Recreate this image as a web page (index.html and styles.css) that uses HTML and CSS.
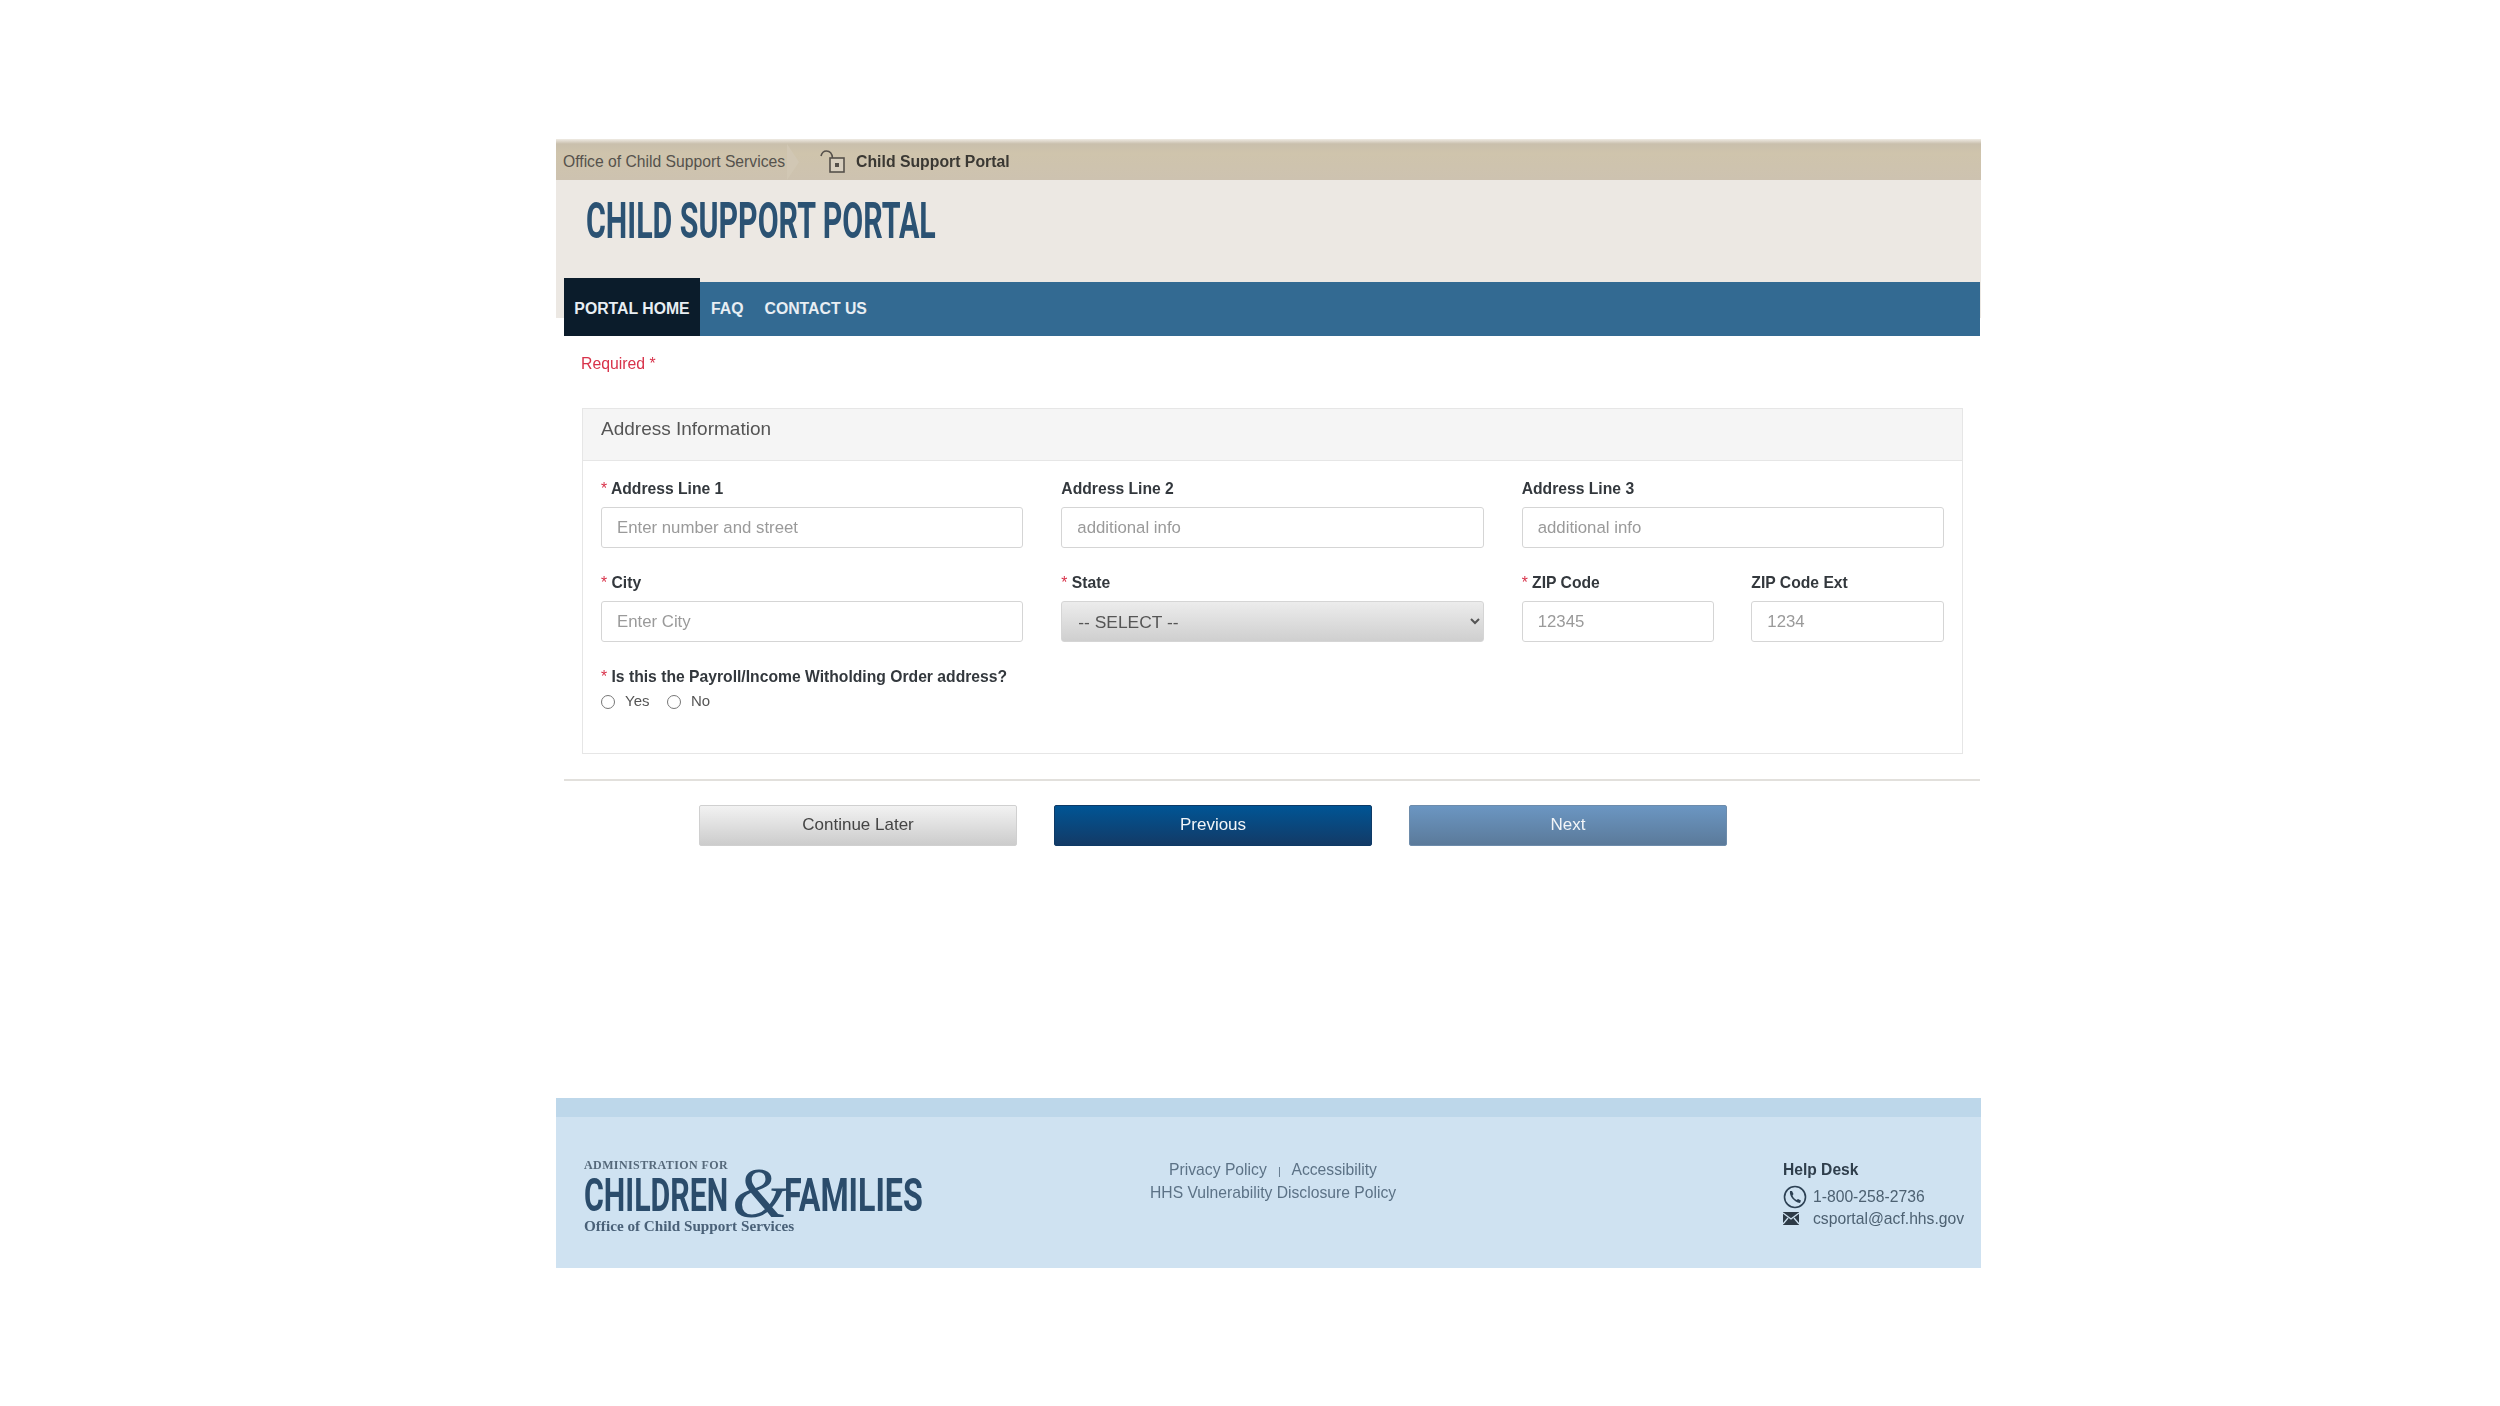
FILE: index.html
```html
<!DOCTYPE html>
<html lang="en">
<head>
<meta charset="utf-8">
<title>Child Support Portal</title>
<link rel="stylesheet" href="styles.css">
</head>
<body>
<div class="page">

  <div class="crumbs">
    <span class="crumbOffice">Office of Child Support Services</span>
    <span class="crumbArrow"></span>
    <svg class="lockIcon" width="26" height="24" viewBox="0 0 26 24" fill="none" stroke="#55504a" stroke-width="1.6">
      <path d="M1 6 C2 2 4 1 6.500 1 C10 1 12 3 12.500 8"/>
      <rect x="10" y="8" width="14" height="14" fill="#d8cfbf"/>
      <rect x="15" y="13" width="4" height="4" fill="#55504a" stroke="none"/>
    </svg>
    <span class="crumbPortal">Child Support Portal</span>
  </div>

  <div class="banner">
    <div class="bannerTitle"><span class="squeeze titleText">CHILD SUPPORT PORTAL</span></div>
  </div>

  <div class="nav">
    <a class="navItem navHome">PORTAL HOME</a>
    <a class="navItem">FAQ</a>
    <a class="navItem">CONTACT US</a>
  </div>

  <div class="required">Required *</div>

  <div class="panel">
    <div class="panelHead">Address Information</div>
    <div class="panelBody">
      <div class="formGrid">
        <div class="field">
          <label><span class="star">*</span> Address Line 1</label>
          <input type="text" placeholder="Enter number and street">
        </div>
        <div class="field">
          <label>Address Line 2</label>
          <input type="text" placeholder="additional info">
        </div>
        <div class="field">
          <label>Address Line 3</label>
          <input type="text" placeholder="additional info">
        </div>
        <div class="field">
          <label><span class="star">*</span> City</label>
          <input type="text" placeholder="Enter City">
        </div>
        <div class="field">
          <label><span class="star">*</span> State</label>
          <select><option>-- SELECT --</option></select>
        </div>
        <div class="zipRow">
          <div class="field">
            <label><span class="star">*</span> ZIP Code</label>
            <input type="text" placeholder="12345">
          </div>
          <div class="field">
            <label>ZIP Code Ext</label>
            <input type="text" placeholder="1234">
          </div>
        </div>
      </div>
      <div class="question">
        <label><span class="star">*</span> Is this the Payroll/Income Witholding Order address?</label>
        <div class="radios">
          <span class="radio"></span><span class="radioText">Yes</span>
          <span class="radio"></span><span class="radioText">No</span>
        </div>
      </div>
    </div>
  </div>

  <hr class="divider">

  <div class="buttons">
    <button class="btn btnLater">Continue Later</button>
    <button class="btn btnPrev">Previous</button>
    <button class="btn btnNext">Next</button>
  </div>

  <div class="footer">
    <div class="footerBand"></div>
    <div class="footerBody">
      <div class="logo">
        <div class="logoAdmin">ADMINISTRATION FOR</div>
        <div class="logoRow">
          <div class="logoChildren"><span class="squeeze logoWord">CHILDREN</span></div>
          <div class="logoAmp">&amp;</div>
          <div class="logoFamilies"><span class="squeeze logoWord logoWide">FAMILIES</span></div>
        </div>
        <div class="logoOffice">Office of Child Support Services</div>
      </div>
      <div class="footerLinks">
        <div>Privacy Policy <span class="pipe">|</span> Accessibility</div>
        <div>HHS Vulnerability Disclosure Policy</div>
      </div>
      <div class="help">
        <div class="helpTitle">Help Desk</div>
        <div class="helpRow">
          <svg class="helpIcon" width="24" height="24" viewBox="0 0 24 24" fill="none" stroke="#2d4154">
            <circle cx="12" cy="12" r="10.500" stroke-width="1.6"/>
            <path d="M7 6 C6 11 11 17 17 18 L18 15.500 L15 14 L13.500 15 C11.500 14 10 12 9.500 10.500 L10.500 9 L9 6 Z" fill="#2d4154" stroke="none"/>
          </svg>
          <span>1-800-258-2736</span>
        </div>
        <div class="helpRow">
          <svg class="helpIcon" width="24" height="16" viewBox="0 0 24 16">
            <rect x="0" y="1" width="16" height="13" fill="#2d3a46"/>
            <path d="M0 2 L8 8 L16 2 M0 13 L5 7 M16 13 L11 7" fill="none" stroke="#cfe2f1" stroke-width="1.300"/>
          </svg>
          <span>csportal@acf.hhs.gov</span>
        </div>
      </div>
    </div>
  </div>

</div>
</body>
</html>
```

FILE: styles.css
```css
* {
  box-sizing: border-box;
}

body {
  margin: 0;
  background-color: #ffffff;
  font-family: "Liberation Sans", Arial, sans-serif;
  color: #333333;
}

.page {
  width: 1425px;
  margin-left: 556px;
  padding-top: 139px;
  filter: blur(0.6px);
}

/* squeezed display type, the portal uses a condensed webfont */
.squeeze {
  display: inline-block;
  transform-origin: left top;
  white-space: nowrap;
  font-family: "Roboto", "Liberation Sans", sans-serif;
}

/* top strip */
.crumbs {
  height: 41px;
  display: flex;
  align-items: center;
  padding: 4px 0 0 7px;
  background: linear-gradient(#efebe4, #c9bfac 12%, #cfc4ac 35%, #cdc2b0);
}

.crumbOffice {
  font-size: 15.700px;
  color: #55524c;
}

.crumbArrow {
  width: 0;
  height: 0;
  margin-left: 2px;
  border-top: 18px solid transparent;
  border-bottom: 18px solid transparent;
  border-left: 12px solid #d1c7b4;
}

.lockIcon {
  margin-left: 21px;
}

.crumbPortal {
  margin-left: 10px;
  font-size: 15.800px;
  font-weight: bold;
  color: #3a3833;
}

.banner {
  height: 138px;
  background-color: #ece8e3;
}

.bannerTitle {
  padding: 12px 0 0 30px;
}

.titleText {
  font-size: 50px;
  line-height: 58px;
  font-weight: bold;
  color: #2b5273;
  transform: scaleX(0.607);
}

/* nav */
.nav {
  display: flex;
  height: 54px;
  margin: -36px 1px 0 8px;
  background-color: #336a92;
  position: relative;
}

.navItem {
  display: flex;
  align-items: center;
  padding: 0 10px;
  font-size: 15.800px;
  font-weight: bold;
  color: #e8eef3;
}

.navItem + .navItem {
  padding-left: 11px;
}

.navHome {
  width: 136px;
  margin-top: -4px;
  padding-top: 4px;
  justify-content: center;
  background-color: #0b1c2b;
  white-space: nowrap;
}

.required {
  margin: 19px 0 0 25px;
  height: 18px;
  font-size: 15.800px;
  line-height: 18px;
  color: #d8324a;
}

/* address panel */
.panel {
  width: 1381px;
  height: 346px;
  margin: 35px 0 0 26px;
  border: 1px solid #e6e6e6;
}

.panelHead {
  height: 52px;
  padding: 10px 0 0 18px;
  background-color: #f5f5f5;
  border-bottom: 1px solid #e6e6e6;
  font-size: 19px;
  line-height: 20px;
  color: #555555;
}

.panelBody {
  padding: 19px 18px 0 18px;
}

.formGrid {
  display: grid;
  grid-template-columns: repeat(3, 1fr);
  column-gap: 38px;
  row-gap: 26px;
}

.zipRow {
  display: grid;
  grid-template-columns: 1fr 1fr;
  column-gap: 37px;
}

label {
  display: block;
  height: 18px;
  font-size: 15.700px;
  line-height: 18px;
  font-weight: bold;
  color: #33383d;
}

.star {
  color: #d8324a;
  font-weight: normal;
}

.field input,
.field select {
  display: block;
  width: 100%;
  height: 41px;
  margin-top: 9px;
  border: 1px solid #d5d5d5;
  border-radius: 3px;
  font-family: "Liberation Sans", Arial, sans-serif;
}

.field input {
  padding: 0 15px;
  background-color: #ffffff;
  font-size: 16.800px;
}

.field input::placeholder {
  color: #9a9a9a;
}

.field select {
  padding: 0 12px;
  background: linear-gradient(#ececec, #cfcfcf);
  color: #555555;
  font-size: 17.400px;
}

.question {
  margin-top: 26px;
}

.radios {
  display: flex;
  align-items: center;
  margin-top: 5px;
  height: 18px;
}

.radio {
  width: 14px;
  height: 14px;
  margin-top: 4px;
  border: 1px solid #767676;
  border-radius: 50%;
  background-color: #ffffff;
}

.radioText {
  width: 42px;
  margin-left: 10px;
  font-size: 15px;
  color: #555555;
}

.radioText:last-child {
  margin-left: 10px;
}

.divider {
  height: 2px;
  margin: 25px 1px 0 8px;
  border: 0;
  background-color: #e2e0dc;
}

/* buttons */
.buttons {
  display: flex;
  gap: 37px;
  margin: 24px 0 0 143px;
}

.btn {
  width: 318px;
  height: 41px;
  padding-bottom: 3px;
  border: 1px solid #d0d0d0;
  border-radius: 2px;
  font-family: "Liberation Sans", Arial, sans-serif;
  font-size: 17px;
}

.btnLater {
  background: linear-gradient(#f2f2f2, #cccccc);
  color: #444444;
}

.btnPrev {
  border-color: #0e3a66;
  background: linear-gradient(#005595, #133a66);
  color: #f2f5f8;
}

.btnNext {
  border-color: #6e8cab;
  background: linear-gradient(#6b96c2, #5b7a9a);
  color: #f2f5f8;
}

/* footer */
.footer {
  height: 170px;
  margin-top: 252px;
  background-color: #cfe2f1;
}

.footerBand {
  height: 19px;
  background-color: #bdd7ea;
}

.footerBody {
  display: grid;
  grid-template-columns: 566px 246px 1fr;
  padding-left: 28px;
}

.logo {
  padding-top: 41px;
  color: #2b4c6b;
}

.logoAdmin {
  height: 14px;
  font-family: "Liberation Serif", serif;
  font-size: 12px;
  line-height: 14px;
  font-weight: bold;
  letter-spacing: 0.400px;
  color: #56697b;
}

.logoRow {
  display: flex;
  height: 36px;
  margin-top: 5px;
}

.logoChildren {
  width: 148px;
}

.logoFamilies {
  width: 137px;
}

.logoWord {
  font-size: 46px;
  line-height: 36px;
  font-weight: bold;
  transform: scaleX(0.66);
}

.logoWide {
  transform: scaleX(0.7);
}

.logoAmp {
  width: 52px;
  margin-top: -20px;
  font-family: "Liberation Serif", serif;
  font-style: italic;
  font-size: 72px;
  line-height: 72px;
  text-align: center;
}

.logoOffice {
  margin-top: 5px;
  font-family: "Liberation Serif", serif;
  font-size: 15.200px;
  line-height: 16px;
  font-weight: bold;
  color: #4a6178;
}

.footerLinks {
  padding-top: 42px;
  text-align: center;
  font-size: 15.700px;
  line-height: 22px;
  color: #5c7286;
  white-space: nowrap;
}

.pipe {
  margin: 0 7px;
  font-size: 11px;
}

.help {
  padding: 43px 0 0 387px;
  font-size: 15.700px;
  color: #4d6172;
}

.helpTitle {
  height: 20px;
  margin-bottom: 6px;
  line-height: 20px;
  font-size: 15.600px;
  font-weight: bold;
  color: #2f3e4c;
}

.helpRow {
  display: flex;
  align-items: center;
  height: 22px;
  white-space: nowrap;
}

.helpIcon {
  margin-right: 6px;
  flex-shrink: 0;
}
```
